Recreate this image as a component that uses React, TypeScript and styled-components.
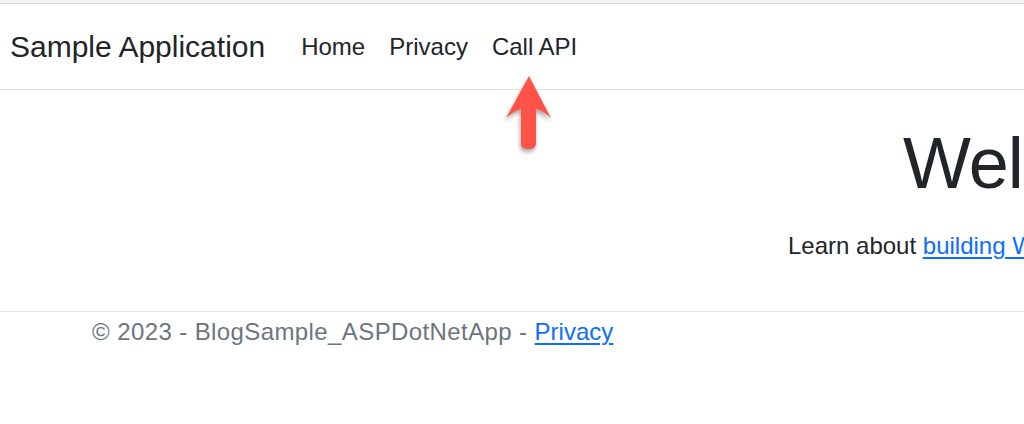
import React from "react";
import styled, { createGlobalStyle } from "styled-components";

const Global = createGlobalStyle`
  html, body {
    margin: 0;
    padding: 0;
    background: #ffffff;
    overflow: hidden;
  }
  body {
    font-family: "Liberation Sans", Arial, Helvetica, sans-serif;
    color: #212529;
    width: 1024px;
    height: 424px;
  }
`;

const Page = styled.div`
  position: relative;
  width: 1024px;
  height: 424px;
  overflow: hidden;
  display: flex;
  flex-direction: column;
`;

const WindowEdge = styled.div`
  height: 3px;
  background: #f4f4f4;
  border-bottom: 1px solid #d8d8d8;
  flex: none;
`;

const Navbar = styled.header`
  height: 85px;
  border-bottom: 1px solid #dee2e6;
  display: flex;
  align-items: center;
  padding-left: 10px;
  flex: none;
`;

const Brand = styled.a`
  font-size: 30px;
  line-height: 1.5;
  color: #212529;
  text-decoration: none;
  margin-right: 24px;
  white-space: nowrap;
`;

const NavList = styled.nav`
  display: flex;
  align-items: center;
`;

const NavLink = styled.a`
  font-size: 24px;
  line-height: 1.5;
  color: #212529;
  text-decoration: none;
  padding: 0 12px;
  white-space: nowrap;
`;

const Main = styled.main`
  height: 221px;
  flex: none;
  padding-left: 903px;
  white-space: nowrap;
`;

const Hero = styled.div`
  display: flex;
  flex-direction: column;
  align-items: flex-start;
`;

const Heading = styled.h1`
  margin: 30px 0 0 0;
  font-size: 72px;
  font-weight: 400;
  line-height: 86px;
  color: #212529;
  letter-spacing: -1px;
`;

const Lead = styled.p`
  margin: 22px 0 0 -115px;
  font-size: 24px;
  line-height: 36px;
  color: #212529;
`;

const Link = styled.a`
  color: #0d6efd;
  text-decoration: underline;
  text-underline-offset: 3px;
`;

const Footer = styled.footer`
  border-top: 1px solid #dee2e6;
  padding: 2px 0 0 92px;
  font-size: 24px;
  line-height: 36px;
  color: #6c757d;
  white-space: nowrap;
`;

const FooterText = styled.span`
  letter-spacing: 0.4px;
`;

const ArrowWrap = styled.div`
  position: absolute;
  left: 497px;
  top: 73px;
  width: 60px;
  height: 90px;
`;

const Arrow = () => (
  <ArrowWrap>
    <svg width="60" height="90" viewBox="0 0 60 90">
      <defs>
        <filter id="sh" x="-30%" y="-30%" width="160%" height="160%">
          <feDropShadow dx="-1" dy="3" stdDeviation="2" floodColor="#000" floodOpacity="0.35" />
        </filter>
      </defs>
      <path
        d="M32 3 L54 45 Q46 38 39 36 L39 71 Q39 76 31.5 76 Q24 76 24 71 L24 36 Q17 38 9 45 Z"
        fill="#ff5247"
        filter="url(#sh)"
      />
    </svg>
  </ArrowWrap>
);

export default function App() {
  return (
    <>
      <Global />
      <Page>
        <WindowEdge />
        <Navbar>
          <Brand href="#">Sample Application</Brand>
          <NavList>
            <NavLink href="#">Home</NavLink>
            <NavLink href="#">Privacy</NavLink>
            <NavLink href="#">Call API</NavLink>
          </NavList>
        </Navbar>
        <Main>
          <Hero>
            <Heading>Welcome</Heading>
            <Lead>
              Learn about <Link href="#">building Web apps with ASP.NET Core</Link>.
            </Lead>
          </Hero>
        </Main>
        <Footer>
          <FooterText>© 2023 - BlogSample_ASPDotNetApp - </FooterText>
          <Link href="#">Privacy</Link>
        </Footer>
        <Arrow />
      </Page>
    </>
  );
}
